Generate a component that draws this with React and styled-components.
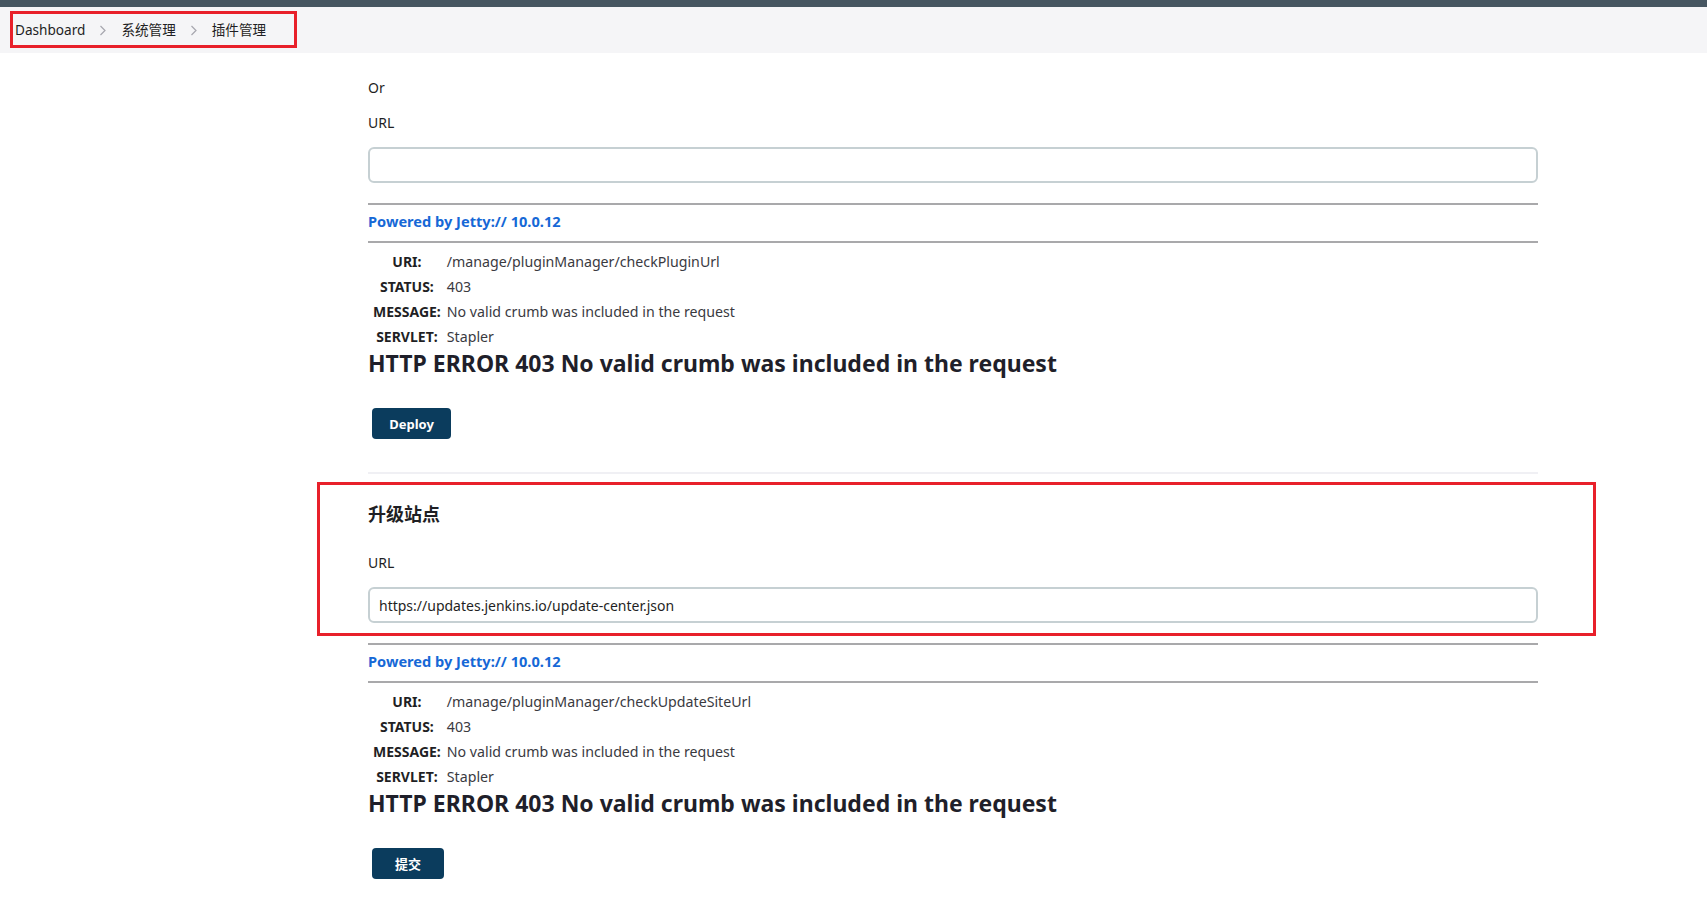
import React from 'react';
import styled, { createGlobalStyle } from 'styled-components';

const Global = createGlobalStyle`
  html, body { margin: 0; padding: 0; background: #ffffff; }
  body {
    font-family: "Noto Sans", "Noto Sans CJK SC", sans-serif;
    font-size: 14px;
    color: #1f1f24;
  }
  * { box-sizing: border-box; }
`;

const Page = styled.div`
  min-height: 904px;
  position: relative;
`;

const TopBar = styled.div`
  height: 7px;
  background: #465661;
`;

const CrumbBar = styled.nav`
  position: relative;
  height: 46px;
  background: #f5f5f7;
  display: flex;
  align-items: center;
  padding-left: 15px;
`;

const CrumbList = styled.ol`
  list-style: none;
  margin: 0;
  padding: 0;
  display: flex;
  align-items: center;
  gap: 14px;
  font-size: 13.6px;
  line-height: 20px;
  color: #1f1f24;
`;

const Crumb = styled.li`
  display: flex;
  align-items: center;
`;

const Chevron = styled.svg`
  width: 8px;
  height: 11px;
  display: block;
`;

const Annotation = styled.div`
  position: absolute;
  border: 3px solid #e8202a;
  pointer-events: none;
`;

const CrumbMark = styled(Annotation)`
  left: 10px;
  top: 4px;
  width: 287px;
  height: 37px;
`;

const Main = styled.main`
  width: 1538px;
  padding: 25px 0 40px 368px;
`;

const Text = styled.p`
  margin: ${(p) => p.$top || 0}px 0 0;
  font-size: 14px;
  line-height: 20px;
  color: #1f1f24;
`;

const TextInput = styled.input`
  display: block;
  width: 100%;
  height: 36px;
  margin-top: 14px;
  padding: 0 9px;
  border: 2px solid #c6d0d3;
  border-radius: 6px;
  background: #fff;
  font-family: "Noto Sans", sans-serif;
  font-size: 14px;
  color: #1f1f24;
  outline: none;
`;

const Rule = styled.hr`
  margin: ${(p) => p.$top}px 0 0;
  border: 0;
  border-top: 2px solid #a9a9ab;
  height: 0;
`;

const Powered = styled.a`
  display: block;
  margin-top: 6px;
  font-size: 14.6px;
  line-height: 20px;
  font-weight: 700;
  color: #1668d6;
  text-decoration: none;
`;

const InfoTable = styled.table`
  margin-top: 5px;
  border-spacing: 2px;
  border-collapse: separate;
  font-size: 14px;
  line-height: 21px;
`;

const Th = styled.th`
  padding: 1px 3px;
  text-align: center;
  font-weight: 700;
  color: #1f1f24;
`;

const Td = styled.td`
  padding: 1px;
  text-align: left;
  font-size: 14.2px;
  color: #3a3a3f;
`;

const ErrorTitle = styled.h2`
  margin: 0;
  font-size: 23px;
  line-height: 26px;
  font-weight: 700;
  color: #1f1f2a;
`;

const Button = styled.button`
  display: block;
  margin: 32px 0 0 4px;
  width: ${(p) => p.$w}px;
  height: 31px;
  padding: 0;
  border: 0;
  border-radius: 4px;
  background: #0b3c5d;
  color: #ffffff;
  font-family: "Noto Sans", "Noto Sans CJK SC", sans-serif;
  font-size: 13px;
  font-weight: 700;
  cursor: pointer;
`;

const Divider = styled.div`
  margin-top: 33px;
  height: 2px;
  background: #f0f0f4;
`;

const Section = styled.section`
  position: relative;
  padding-top: ${(p) => p.$pad || 0}px;
`;

const SectionMark = styled(Annotation)`
  left: -51px;
  top: 8px;
  width: 1279px;
  height: 154px;
`;

const SectionTitle = styled.h3`
  margin: 0;
  font-size: 18px;
  line-height: 24px;
  font-weight: 700;
  color: #1f1f24;
`;

const ChevronIcon = () => (
  <Chevron viewBox="0 0 8 11">
    <path d="M1.5 1 L6 5.5 L1.5 10" fill="none" stroke="#a6a6ae" strokeWidth="1.2" />
  </Chevron>
);

const ErrorReport = ({ uri }) => (
  <>
    <Rule $top={20} />
    <Powered href="#">Powered by Jetty:// 10.0.12</Powered>
    <Rule $top={10} />
    <InfoTable>
      <tbody>
        <tr><Th>URI:</Th><Td>{uri}</Td></tr>
        <tr><Th>STATUS:</Th><Td>403</Td></tr>
        <tr><Th>MESSAGE:</Th><Td>No valid crumb was included in the request</Td></tr>
        <tr><Th>SERVLET:</Th><Td>Stapler</Td></tr>
      </tbody>
    </InfoTable>
    <ErrorTitle>HTTP ERROR 403 No valid crumb was included in the request</ErrorTitle>
  </>
);

export default function App() {
  return (
    <Page>
      <Global />
      <TopBar />
      <CrumbBar>
        <CrumbList>
          <Crumb>Dashboard</Crumb>
          <Crumb><ChevronIcon /></Crumb>
          <Crumb>系统管理</Crumb>
          <Crumb><ChevronIcon /></Crumb>
          <Crumb>插件管理</Crumb>
        </CrumbList>
        <CrumbMark />
      </CrumbBar>
      <Main>
        <Section>
          <Text>Or</Text>
          <Text $top={15}>URL</Text>
          <TextInput defaultValue="" />
          <ErrorReport uri="/manage/pluginManager/checkPluginUrl" />
          <Button $w={79}>Deploy</Button>
        </Section>
        <Divider />
        <Section $pad={28}>
          <SectionMark />
          <SectionTitle>升级站点</SectionTitle>
          <Text $top={27}>URL</Text>
          <TextInput defaultValue="https://updates.jenkins.io/update-center.json" />
          <ErrorReport uri="/manage/pluginManager/checkUpdateSiteUrl" />
          <Button $w={72}>提交</Button>
        </Section>
      </Main>
    </Page>
  );
}
